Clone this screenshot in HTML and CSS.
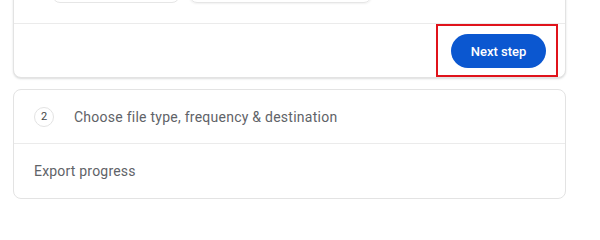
FILE: index.html
```html
<!DOCTYPE html>
<html>
<head>
<meta charset="utf-8">
<link rel="stylesheet" href="styles.css">
</head>
<body>
<div class="page">
  <div class="card card-top">
    <div class="chips">
      <div class="chip chip-a"></div>
      <div class="chip chip-b"></div>
    </div>
    <div class="footer">
      <button class="btn-primary">Next step</button>
      <div class="highlight"></div>
    </div>
  </div>
  <div class="card card-steps">
    <div class="step-row">
      <span class="step-num">2</span>
      <span class="step-title">Choose file type, frequency &amp; destination</span>
    </div>
    <div class="progress-row">Export progress</div>
  </div>
</div>
</body>
</html>
```

FILE: styles.css
```css
html, body {
  margin: 0;
  padding: 0;
  background: #ffffff;
  font-family: Roboto, "Liberation Sans", Arial, sans-serif;
  overflow: hidden;
}

.page {
  padding-left: 13px;
  width: 553px;
}

.card {
  background: #fff;
  border: 1px solid #e3e3e3;
  border-radius: 8px;
  box-sizing: border-box;
}

.card-top {
  margin-top: -38px;
  box-shadow: 0 1px 2px rgba(60, 64, 67, 0.18);
}

.chips {
  display: flex;
  gap: 9px;
  padding: 8px 0 20px 38px;
}

.chip {
  height: 32px;
  border: 1px solid #e6e6e6;
  border-radius: 8px;
  box-sizing: border-box;
}

.chip-a { width: 128px; }
.chip-b { width: 183px; box-shadow: 0 1px 2px rgba(0,0,0,0.06); }

.footer {
  position: relative;
  border-top: 1px solid #ebebeb;
  height: 53px;
  display: flex;
  align-items: center;
  justify-content: flex-end;
  padding-right: 19px;
}

.btn-primary {
  height: 34px;
  width: 95px;
  border: none;
  border-radius: 17px;
  background: #0b57d0;
  color: #fff;
  font-family: Roboto, "Liberation Sans", Arial, sans-serif;
  font-size: 13px;
  font-weight: 500;
  padding: 0;
  margin-top: 1px;
}

.highlight {
  position: absolute;
  top: 0;
  right: 7px;
  width: 122px;
  height: 53px;
  border: 2px solid #e0131b;
  box-sizing: border-box;
}

.card-steps {
  margin-top: 11px;
}

.step-row {
  display: flex;
  align-items: center;
  height: 53px;
  padding-left: 20px;
  border-bottom: 1px solid #ebebeb;
}

.step-num {
  width: 20px;
  height: 20px;
  border: 1px solid #e3e3e3;
  border-radius: 50%;
  box-sizing: border-box;
  display: flex;
  align-items: center;
  justify-content: center;
  font-size: 11px;
  color: #444746;
  margin-right: 20px;
}

.step-title {
  font-size: 14px;
  color: #5f6368;
  letter-spacing: 0.25px;
}

.progress-row {
  height: 54px;
  display: flex;
  align-items: center;
  padding-left: 20px;
  font-size: 14px;
  color: #5f6368;
  letter-spacing: 0.2px;
}
```
